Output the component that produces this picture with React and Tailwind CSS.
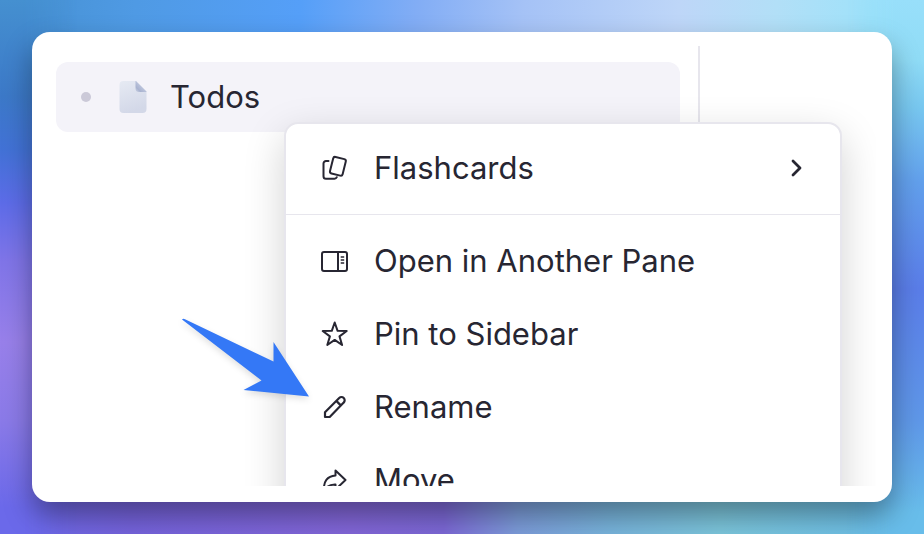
import React from 'react';

const iconClass = 'size-7 shrink-0';

function CardsIcon() {
  return (
    <svg className={iconClass} viewBox="0 0 28 28" fill="none" stroke="currentColor" strokeWidth="2" strokeLinecap="round" strokeLinejoin="round">
      <path d="M7.5 7H5a2.5 2.5 0 0 0-2.5 2.5v12.7A2.5 2.5 0 0 0 5 24.7h8.5a2.5 2.5 0 0 0 2.3-1.5" />
      <rect x="10.400" y="3.800" width="13" height="17" rx="2" transform="rotate(14 16.900 12.300)" />
    </svg>
  );
}

function PaneIcon() {
  return (
    <svg className={iconClass} viewBox="0 0 28 28" fill="none" stroke="currentColor" strokeWidth="2">
      <rect x="1" y="5" width="25" height="19" rx="2" />
      <path d="M17 5v19" />
      <path d="M19.700 10h3.500M19.700 13h3.500M19.700 16h3.500" strokeWidth="1.500" />
    </svg>
  );
}

function StarIcon() {
  return (
    <svg className={iconClass} viewBox="0 0 28 28" fill="none" stroke="currentColor" strokeWidth="2" strokeLinejoin="round">
      <path d="M13.700 2.500l2.900 8.300 9.100.2-7.200 5.400 2.600 8.600-7.400-5.100L6.300 25l2.600-8.600L1.700 11l9.100-.2z" />
    </svg>
  );
}

function PencilIcon() {
  return (
    <svg className={iconClass} viewBox="0 0 28 28" fill="none" stroke="currentColor" strokeWidth="2.200" strokeLinejoin="round">
      <path d="M4 19.300 18.200 5a3.200 3.200 0 0 1 4.500 4.600L8.700 24H4zM15.300 7.900l4.700 4.700" />
    </svg>
  );
}

function MoveIcon() {
  return (
    <svg className={iconClass} viewBox="0 0 28 28" fill="none" stroke="currentColor" strokeWidth="2" strokeLinejoin="round">
      <path d="M14.500 4.500l10 9.500-10 9.500V18.500C9 18.300 6 20 3 24c-.6-8 3-14 11.500-14.500z" />
    </svg>
  );
}

function PageIcon() {
  return (
    <svg className="w-7 h-8 shrink-0" viewBox="0 0 28 32">
      <defs>
        <linearGradient id="page" x1="0" y1="0" x2="0.300" y2="1">
          <stop offset="0" stopColor="#e6eaf3" />
          <stop offset="1" stopColor="#d3d8e8" />
        </linearGradient>
        <linearGradient id="fold" gradientUnits="userSpaceOnUse" x1="16" y1="11.500" x2="22.500" y2="5">
          <stop offset="0" stopColor="#d5dbe9" />
          <stop offset="0.500" stopColor="#a9b3d0" />
          <stop offset="1" stopColor="#bcc4dc" />
        </linearGradient>
      </defs>
      <path d="M4 0h13l10.500 10.500V28a4 4 0 0 1-4 4H4.500a4 4 0 0 1-4-4V4a4 4 0 0 1 4-4z" fill="url(#page)" />
      <path d="M16.500 0h.5l10.500 10.500v.5H20a3.500 3.500 0 0 1-3.500-3.500z" fill="url(#fold)" />
    </svg>
  );
}

function MenuItem({ icon: Icon, label, submenu }) {
  return (
    <button type="button" role="menuitem" className="flex h-[73px] w-full items-center gap-[25px] pl-[35px] pr-8 text-left">
      <Icon />
      <span className="flex-1 whitespace-nowrap">{label}</span>
      {submenu && (
        <svg className="size-6 shrink-0" viewBox="0 0 24 24" fill="none" stroke="currentColor" strokeWidth="2.800" strokeLinecap="round" strokeLinejoin="round">
          <path d="M9 5l7 7-7 7" />
        </svg>
      )}
    </button>
  );
}

const items = [
  { icon: PaneIcon, label: 'Open in Another Pane' },
  { icon: StarIcon, label: 'Pin to Sidebar' },
  { icon: PencilIcon, label: 'Rename' },
  { icon: MoveIcon, label: 'Move' },
];

function Backdrop() {
  return (
    <div aria-hidden="true" className="absolute inset-0 -z-10 bg-[linear-gradient(95deg,#4590d0_0%,#4f9ae4_14%,#559ff8_31%,#82adf5_43%,#a5c2f6_54%,#bed6f8_70%,#b2dff7_80%,#9ce2fa_91%,#98dcf8_100%)]">
      <div className="absolute inset-0 bg-[linear-gradient(90deg,#6b69ea_0%,#7563dc_14%,#8266d8_38%,#7c68d6_48%,#7c9cda_56%,#78b4dc_66%,#7cc6dc_78%,#68bdea_100%)] mask-[linear-gradient(180deg,transparent_12%,black_55%)]" />
      <div className="absolute inset-y-0 left-0 w-1/12 bg-[linear-gradient(180deg,#4590d0_0%,#3c79c8_18%,#4272d6_28%,#5d6ce8_38%,#8075e8_49%,#9880ea_64%,#8a7ae8_79%,#6b69ea_95%)] mask-[linear-gradient(90deg,black_30%,transparent)]" />
      <div className="absolute inset-y-0 right-0 w-1/12 bg-[linear-gradient(180deg,#98dffa_0%,#90dcf6_11%,#78c8f0_20%,#62a0ec_34%,#5a7de8_54%,#5f98e8_79%,#68bdea_96%)] mask-[linear-gradient(270deg,black_40%,transparent)]" />
    </div>
  );
}

export default function App() {
  return (
    <main className='relative isolate flex min-h-screen p-8 font-["Inter",sans-serif] text-[31px] leading-10 text-[#272632]'>
      <Backdrop />
      <section className="flex-1 rounded-[18px] bg-white pt-[14px] pb-4 shadow-[0_14px_28px_rgba(0,0,0,0.36)]">
        <div className="relative mx-4 flex h-full overflow-hidden">
          <div className="flex-1 border-r-2 border-[#e7e6ed] pt-4 pr-[18px] pl-2">
            <a href="#todos" className="flex h-[70px] items-center rounded-xl bg-[#f4f3f9] pl-[25px]">
              <span className="size-[10px] rounded-full bg-[#cbc9d8]" />
              <span className="ml-7"><PageIcon /></span>
              <span className="ml-[23px]">Todos</span>
            </a>
          </div>
          <div className="w-44" />

          <div role="menu" className="absolute top-[76px] right-[34px] left-[236px] rounded-[14px] border-2 border-[#e7e6ed] bg-white shadow-[0_14px_40px_rgba(0,0,0,0.18)]">
            <div className="border-b border-[#e7e6ed] pt-[7px] pb-[10px]">
              <MenuItem icon={CardsIcon} label="Flashcards" submenu />
            </div>
            <div className="pt-[9px] pb-2">
              {items.map((item) => (
                <MenuItem key={item.label} {...item} />
              ))}
            </div>
          </div>

          <svg className="absolute top-[272px] left-[134px] h-[80px] w-[128px] drop-shadow-md" viewBox="0 0 128 80">
            <path d="M0 1.500Q1 .3 3 1.300L91.500 43.500V24L127 78.500 61.500 72 79.500 62.500z" fill="#3478f6" />
          </svg>
        </div>
      </section>
    </main>
  );
}
